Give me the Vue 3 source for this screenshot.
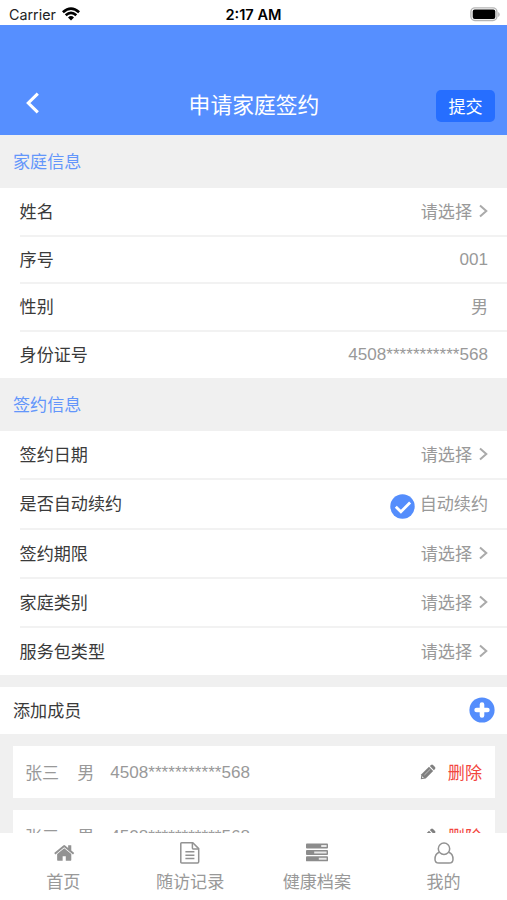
<script setup>
const familyRows = [
  { label: '姓名', value: '请选择', pick: true },
  { label: '序号', value: '001', num: true },
  { label: '性别', value: '男' },
  { label: '身份证号', value: '4508***********568', num: true },
]
const signRows = [
  { label: '签约日期', value: '请选择', pick: true },
  { label: '是否自动续约', value: '自动续约', check: true },
  { label: '签约期限', value: '请选择', pick: true },
  { label: '家庭类别', value: '请选择', pick: true },
  { label: '服务包类型', value: '请选择', pick: true },
]
const members = [
  { name: '张三', sex: '男', id: '4508***********568' },
  { name: '张三', sex: '男', id: '4508***********568' },
]
</script>

<template>
  <div class="phone">
    <div class="status">
      <div class="carrier">
        <span>Carrier</span>
        <svg width="18" height="14" viewBox="0 0 18 14" fill="none" stroke="#000" stroke-width="2.7">
          <path d="M.9 5.2Q9-2 17.1 5.2" />
          <path d="M3.7 8.3Q9 3.5 14.3 8.3" />
          <path d="M9 13.4 6 10.4Q9 7.8 12 10.4Z" fill="#000" stroke="none" />
        </svg>
      </div>
      <span class="time">2:17 AM</span>
      <svg class="battery" width="31" height="15" viewBox="0 0 31 15">
        <rect x="1.9" y=".9" width="26" height="12.6" rx="4" fill="#fff" stroke="#b5b5b5" stroke-width="1.4" />
        <rect x="3.7" y="2.4" width="22.6" height="9.6" rx="2" fill="#000" />
        <path d="M29.2 5v5q1.5-.7 1.5-2.5T29.2 5Z" fill="#b5b5b5" />
      </svg>
    </div>

    <header class="header">
      <svg class="back" width="14" height="22" viewBox="0 0 14 22" fill="none" stroke="#fff" stroke-width="3.1">
        <path d="M11.8 1.6 2.3 11l9.5 9.4" />
      </svg>
      <h1>申请家庭签约</h1>
      <button class="submit">提交</button>
    </header>

    <main class="content">
      <h2>家庭信息</h2>
      <section class="group family">
        <div v-for="row in familyRows" :key="row.label" class="row">
          <span class="label">{{ row.label }}</span>
          <span class="value" :class="{ num: row.num }">{{ row.value }}</span>
          <svg v-if="row.pick" class="arrow" width="9" height="14" viewBox="0 0 9 14"><path d="m1 1.4 6.3 5.6L1 12.6" /></svg>
        </div>
      </section>

      <h2>签约信息</h2>
      <section class="group sign">
        <div v-for="row in signRows" :key="row.label" class="row">
          <span class="label">{{ row.label }}</span>
          <svg v-if="row.check" class="check" width="25" height="25" viewBox="0 0 25 25">
            <circle cx="12.5" cy="12.5" r="12.2" fill="#548dfc" />
            <path d="m5.8 12.8 5.1 5 9.2-9.4" fill="none" stroke="#fff" stroke-width="2.8" />
          </svg>
          <span class="value">{{ row.value }}</span>
          <svg v-if="row.pick" class="arrow" width="9" height="14" viewBox="0 0 9 14"><path d="m1 1.4 6.3 5.6L1 12.6" /></svg>
        </div>
      </section>

      <div class="add">
        <span class="title">添加成员</span>
        <svg width="26" height="26" viewBox="0 0 26 26">
          <circle cx="13" cy="13" r="12.6" fill="#548dfc" />
          <path d="M13 7.6v10.8M7.6 13h10.8" stroke="#fff" stroke-width="4.6" stroke-linecap="round" />
        </svg>
      </div>

      <div class="members">
        <div v-for="(m, i) in members" :key="i" class="member">
          <span class="name">{{ m.name }}</span>
          <span class="sex">{{ m.sex }}</span>
          <span class="id">{{ m.id }}</span>
          <svg class="pencil" width="16" height="16" viewBox="0 0 16 16" fill="#808080">
            <path d="M.8 15.2 1.4 10.2 9 2.8 13.2 7l-7.5 7.5Z" />
            <path d="m9.8 2.1 1.2-1.1q1-.9 2 0l2 2q.9 1 0 2l-1.1 1.2Z" />
            <path d="m4.4 11 6-5.9" stroke="#c4c4c4" stroke-width=".9" />
            <path d="m2.3 12.2 1.5 1.5-1.3.2-.4-.4Z" fill="#fff" />
          </svg>
          <span class="delete">删除</span>
        </div>
      </div>
    </main>

    <nav class="tabs">
      <div class="tab">
        <svg class="home" width="22" height="22" viewBox="0 0 1792 1792" fill="#929292">
          <path d="M1408 992v480q0 26-19 45t-45 19h-384v-384h-256v384h-384q-26 0-45-19t-19-45v-480q0-1 .5-3t.5-3l575-474 575 474q1 2 1 6zm223-69l-62 74q-8 9-21 11h-3q-13 0-21-7l-692-577-692 577q-12 8-24 7-13-2-21-11l-62-74q-8-10-7-23.5t11-21.5l719-599q32-26 76-26t76 26l244 204v-195q0-14 9-23t23-9h192q14 0 23 9t9 23v408l219 182q10 8 11 21.5t-7 23.5z" />
        </svg>
        <span>首页</span>
      </div>
      <div class="tab">
        <svg width="20" height="22" viewBox="0 0 20 22" fill="none" stroke="#929292" stroke-width="1.5">
          <path d="M1.6.8h11.2l5.9 5.8v13.2q0 1.2-1.2 1.2H1.8Q.8 21 .8 20V1.7q0-.9.8-.9Z" />
          <path d="M12.4 1v5.1q0 .8.8.8h5.3M5.4 9.8h9M5.4 13.2h9M5.4 16.6h9" />
        </svg>
        <span>随访记录</span>
      </div>
      <div class="tab">
        <svg width="24" height="22" viewBox="0 0 24 22">
          <g fill="#8c8c8c">
            <rect x="1" y="1.5" width="22" height="5" rx=".9" />
            <rect x="1" y="7.9" width="22" height="5" rx=".9" />
            <rect x="1" y="14.3" width="22" height="5" rx=".9" />
          </g>
          <path d="M16.2 4h5.4M9.2 10.4h12.4M13.8 16.8h7.8" stroke="#e8e8e8" stroke-width="2" />
        </svg>
        <span>健康档案</span>
      </div>
      <div class="tab">
        <svg width="20" height="22" viewBox="0 0 20 22" fill="none" stroke="#929292" stroke-width="1.5">
          <circle cx="10" cy="6.7" r="5.7" />
          <path d="M5.1 10.2Q1 11.8 1 17.2q0 3.9 3.9 3.9h10.2q3.9 0 3.9-3.9 0-5.4-4.1-7" />
        </svg>
        <span>我的</span>
      </div>
    </nav>
  </div>
</template>

<style>
body {
  margin: 0;
}
</style>

<style scoped>
.phone {
  width: 507px;
  height: 900px;
  display: flex;
  flex-direction: column;
  overflow: hidden;
  background: #fff;
  color: #3a3a3a;
  font-family: "Liberation Sans", "Noto Sans CJK SC", sans-serif;
  font-size: 17.1px;
  line-height: 24px;
}
svg {
  display: block;
  flex: none;
}
.status {
  flex: none;
  box-sizing: border-box;
  height: 25px;
  padding: 1px 7px 0 9px;
  display: grid;
  grid-template-columns: 1fr auto 1fr;
  align-items: center;
  font-family: Inter, sans-serif;
  font-size: 14.3px;
  color: #222;
}
.carrier {
  display: flex;
  align-items: center;
  gap: 6px;
}
.carrier span,
.time {
  padding-top: 2px;
}
.time {
  margin-left: -2px;
  font-size: 14.6px;
  font-weight: 600;
  color: #000;
}
.battery {
  justify-self: end;
}
.header {
  flex: none;
  box-sizing: border-box;
  height: 110px;
  padding: 49px 12px 0 26px;
  display: grid;
  grid-template-columns: 1fr auto 1fr;
  align-items: center;
  background: #568fff;
  color: #fff;
}
h1 {
  margin: 2px 0 0 -13px;
  font-size: 21.8px;
  line-height: 30px;
  font-weight: 400;
}
.back {
  margin-top: -4px;
}
.submit {
  justify-self: end;
  margin: 2px 0 0;
  width: 59px;
  height: 32px;
  padding: 4px 0 0;
  border: 0;
  border-radius: 5px;
  background: #266eff;
  color: #fff;
  font: inherit;
}
.content {
  flex: none;
  height: 698px;
  overflow: hidden;
  background: #f0f0f0;
}
h2 {
  box-sizing: border-box;
  margin: 0;
  height: 53px;
  padding: 2px 0 0 13px;
  line-height: 51px;
  font-size: 17.1px;
  font-weight: 400;
  color: #6396fb;
}
.group {
  display: grid;
  padding-left: 19.6px;
  background: #fff;
}
.family {
  height: 190px;
  grid-template-rows: 48.5px 47.5px 47.5px 46.5px;
}
.sign {
  height: 244px;
  grid-template-rows: 48.5px 50px 49px 49px 47.5px;
}
.row {
  display: flex;
  align-items: center;
  padding-right: 19px;
  border-bottom: 2px solid #f2f2f2;
}
.row:last-child {
  border-bottom: 0;
}
.label,
.value {
  padding-top: 3px;
}
.label {
  flex: 1;
}
.value {
  color: #999;
}
.value.num {
  padding-top: 1px;
}
.arrow {
  margin-left: 7px;
  fill: none;
  stroke: #aaa;
  stroke-width: 2;
}
.check {
  margin: 6px 5px 0 0;
}
.add {
  box-sizing: border-box;
  margin-top: 12px;
  height: 47px;
  padding: 0 12px 2px 13px;
  display: flex;
  align-items: center;
  justify-content: space-between;
  background: #fff;
}
.title {
  padding-top: 4px;
}
.members {
  display: grid;
  gap: 12px;
  padding: 12px 12px 0 13px;
}
.member {
  height: 52px;
  padding: 0 13px 0 12px;
  display: flex;
  align-items: center;
  background: #fff;
  color: #999;
}
.name,
.sex,
.delete {
  padding-top: 3px;
}
.sex {
  margin-left: 18px;
}
.id {
  flex: 1;
  margin-left: 16px;
  padding-top: 1px;
}
.pencil {
  margin-right: 12px;
}
.delete {
  color: #f2463e;
}
.tabs {
  flex: 1;
  display: grid;
  grid-template-columns: repeat(4, 1fr);
  background: #fff;
  color: #999;
}
.tab {
  display: flex;
  flex-direction: column;
  align-items: center;
  gap: 7px;
  padding-top: 9px;
}
.home {
  margin-left: 3px;
}
</style>
